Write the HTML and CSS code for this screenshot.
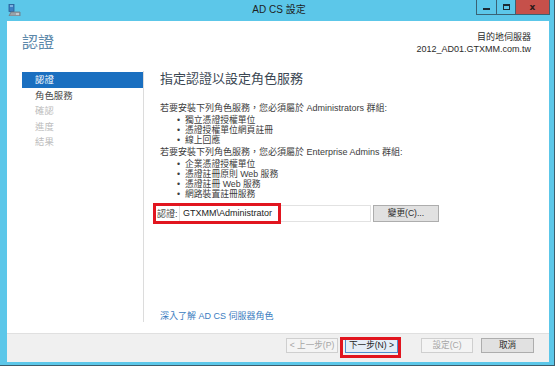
FILE: index.html
```html
<!DOCTYPE html>
<html lang="zh-Hant">
<head>
<meta charset="utf-8">
<title>AD CS 設定</title>
<link rel="stylesheet" href="styles.css">
</head>
<body>
<div class="window">
  <div class="titlebar">
    <div class="tb-icon">
      <svg width="13" height="12" viewBox="0 0 13 12">
        <rect x="1" y="0.5" width="5" height="7" fill="#3b7fc4" stroke="#2a5d96" stroke-width="0.8"/>
        <rect x="2" y="1.5" width="3" height="1" fill="#bfe0f7"/>
        <path d="M1 12 L3 8 L12 8 L12 12 Z" fill="#9aa3ab" stroke="#6e7780" stroke-width="0.8"/>
        <rect x="8" y="9.5" width="3" height="1" fill="#e8eef2"/>
      </svg>
    </div>
    <div class="tb-title">AD CS 設定</div>
    <div class="tb-buttons">
      <div class="tb-btn tb-min"><span class="glyph-min"></span></div>
      <div class="tb-btn tb-max"><span class="glyph-max"></span></div>
      <div class="tb-btn tb-close"><span class="glyph-close">x</span></div>
    </div>
  </div>
  <div class="frame">
    <div class="header">
      <div class="page-title">認證</div>
      <div class="target">
        <div>目的地伺服器</div>
        <div>2012_AD01.GTXMM.com.tw</div>
      </div>
    </div>
    <div class="body">
      <div class="nav">
        <div class="nav-item selected">認證</div>
        <div class="nav-item">角色服務</div>
        <div class="nav-item disabled">確認</div>
        <div class="nav-item disabled">進度</div>
        <div class="nav-item disabled">結果</div>
      </div>
      <div class="main">
        <div class="heading">指定認證以設定角色服務</div>
        <p class="para">若要安裝下列角色服務，您必須屬於 Administrators 群組:</p>
        <ul class="list">
          <li>獨立憑證授權單位</li>
          <li>憑證授權單位網頁註冊</li>
          <li>線上回應</li>
        </ul>
        <p class="para para2">若要安裝下列角色服務，您必須屬於 Enterprise Admins 群組:</p>
        <ul class="list">
          <li>企業憑證授權單位</li>
          <li>憑證註冊原則 Web 服務</li>
          <li>憑證註冊 Web 服務</li>
          <li>網路裝置註冊服務</li>
        </ul>
        <div class="cred-row">
          <span class="cred-label">認證:</span>
          <div class="cred-input">GTXMM\Administrator</div>
          <div class="btn cred-btn">變更(C)...</div>
          <div class="mark mark-cred"></div>
        </div>
        <a class="learn" href="#">深入了解 AD CS 伺服器角色</a>
      </div>
    </div>
    <div class="footer">
      <div class="btn disabled btn-prev">&lt; 上一步(P)</div>
      <div class="btn default btn-next">下一步(N) &gt;<div class="mark mark-next"></div></div>
      <div class="btn disabled btn-config">設定(C)</div>
      <div class="btn btn-cancel">取消</div>
    </div>
  </div>
</div>
</body>
</html>
```
FILE: styles.css
```css
html, body {
  margin: 0;
  padding: 0;
}
body {
  width: 557px;
  height: 370px;
  overflow: hidden;
  background: #ffffff;
  font-family: "Liberation Sans", "Noto Sans CJK TC", sans-serif;
  color: #3c3c3c;
}
.window {
  width: 554px;
  height: 365px;
  background: #5cc7e9;
  border-right: 1px solid #3d5d6c;
  border-bottom: 1px solid #3d5d6c;
  display: flex;
  flex-direction: column;
}
.titlebar {
  height: 21px;
  flex: none;
  display: grid;
  grid-template-columns: 1fr auto 1fr;
  align-items: start;
  padding: 0 4px 0 8px;
}
.tb-icon {
  padding-top: 4px;
  height: 12px;
}
.tb-icon svg {
  display: block;
}
.tb-title {
  font-size: 10px;
  line-height: 20px;
  color: #1e1e1e;
}
.tb-buttons {
  justify-self: end;
  display: flex;
  height: 15px;
}
.tb-btn {
  height: 14px;
  border: 1px solid #3a6274;
  border-top: none;
  border-right: none;
  display: flex;
  align-items: center;
  justify-content: center;
  box-sizing: content-box;
}
.tb-min { width: 19px; }
.tb-max { width: 18px; }
.tb-close {
  width: 33px;
  background: #c6504a;
  border-right: 1px solid #3a6274;
}
.glyph-min {
  width: 7px;
  height: 2px;
  background: #1c2a33;
  margin-top: 4px;
}
.glyph-max {
  width: 5px;
  height: 3px;
  border: 1px solid #1c2a33;
  border-top-width: 2px;
}
.glyph-close {
  font-family: "DejaVu Sans", sans-serif;
  font-weight: bold;
  font-size: 9px;
  line-height: 10px;
  color: #2a1a1a;
}
.frame {
  flex: 1;
  margin: 0 5px 3px 7px;
  background: #ffffff;
  display: flex;
  flex-direction: column;
  min-height: 0;
}
.header {
  height: 50px;
  flex: none;
  display: flex;
  justify-content: space-between;
  padding: 0 18px 0 15px;
}
.page-title {
  font-size: 16px;
  line-height: 20px;
  margin-top: 12px;
  color: #5c88aa;
}
.target {
  padding-top: 10px;
  text-align: right;
  font-size: 9px;
  line-height: 12px;
  color: #2b2b2b;
}
.body {
  flex: 1;
  display: flex;
  min-height: 0;
}
.nav {
  width: 121px;
  margin-left: 15px;
  padding-top: 1px;
  margin-bottom: 11px;
  border-right: 1px solid #dcdcdc;
}
.nav-item {
  height: 15.5px;
  line-height: 15.5px;
  font-size: 9.4px;
  padding-left: 13px;
  color: #4a4a4a;
}
.nav-item.selected {
  background: #1a6fc0;
  color: #ffffff;
}
.nav-item.disabled {
  color: #bdbdbd;
}
.main {
  flex: 1;
  display: flex;
  flex-direction: column;
  padding-left: 16px;
}
.heading {
  font-size: 13px;
  line-height: 15px;
  color: #3a4652;
}
.para {
  margin: 17px 0 0;
  font-size: 9px;
  line-height: 10px;
  color: #3c3c3c;
}
.para2 {
  margin-top: 2px;
}
.list {
  list-style: none;
  margin: 2px 0 0;
  padding: 0 0 0 17px;
  font-size: 8.8px;
  line-height: 10px;
  color: #3c3c3c;
}
.list li::before {
  content: "•";
  display: inline-block;
  width: 8px;
}
.cred-row {
  position: relative;
  display: flex;
  align-items: center;
  margin: 6px 0 0 -3px;
  height: 17px;
  font-size: 9px;
}
.cred-label {
  width: 22px;
  color: #3c3c3c;
}
.cred-input {
  width: 187px;
  height: 15px;
  line-height: 15px;
  border: 1px solid #e2e2e2;
  padding-left: 3px;
  box-sizing: content-box;
  color: #222;
  font-size: 9px;
  white-space: nowrap;
  overflow: hidden;
}
.btn {
  height: 13px;
  line-height: 13px;
  font-size: 8.6px;
  text-align: center;
  border: 1px solid #adadad;
  background: #e1e1e1;
  color: #2a2a2a;
  box-sizing: content-box;
  white-space: nowrap;
}
.cred-btn {
  width: 64px;
  height: 15px;
  line-height: 15px;
  margin-left: 2px;
}
.mark {
  position: absolute;
  box-sizing: border-box;
  border: 3px solid #e1151f;
  pointer-events: none;
}
.mark-cred {
  left: -4px;
  top: -2px;
  width: 128px;
  height: 21px;
}
.learn {
  margin-top: auto;
  margin-bottom: 11px;
  font-size: 9px;
  line-height: 12px;
  color: #3a7cc0;
  text-decoration: none;
}
.footer {
  flex: none;
  height: 29px;
  background: #f0f0f0;
  border-top: 1px solid #e0e0e0;
  display: flex;
  justify-content: flex-end;
  align-items: flex-start;
  padding: 4px 15px 0 0;
  box-sizing: border-box;
}
.btn.disabled {
  background: #f4f4f4;
  border-color: #cfcfcf;
  color: #a6a6a6;
}
.btn.default {
  position: relative;
  background: #e5eef7;
  border-color: #4f8fcf;
  color: #1e1e1e;
}
.btn-prev { width: 50px; }
.btn-next { width: 51px; margin-left: 7px; }
.btn-config { width: 50px; margin-left: 23px; }
.btn-cancel { width: 51px; margin-left: 8px; }
.mark-next {
  left: -6px;
  top: -2px;
  width: 61px;
  height: 21px;
}
```
